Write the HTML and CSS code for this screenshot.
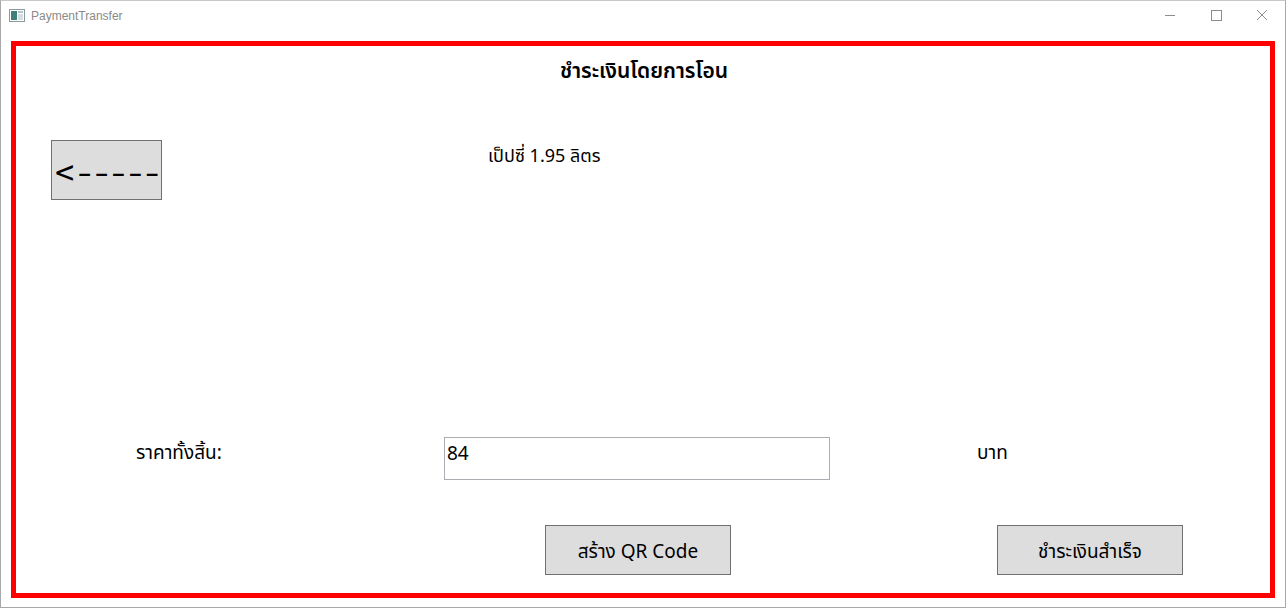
FILE: index.html
```html
<!DOCTYPE html>
<html lang="th">
<head>
<meta charset="utf-8">
<title>PaymentTransfer</title>
<link rel="stylesheet" href="styles.css">
</head>
<body>
<div class="window">
  <div class="titlebar">
    <div class="app">
      <svg class="app-icon" width="16" height="13" viewBox="0 0 16 13">
        <rect x="0.5" y="0.5" width="15" height="12" fill="#fff" stroke="#8a9aa0"/>
        <rect x="2" y="2" width="6" height="9" fill="#3f7f7a"/>
        <rect x="9" y="2" width="5" height="2" fill="#b9c4c8"/>
        <rect x="9" y="5" width="5" height="6" fill="#d6dde0"/>
      </svg>
      <span class="app-title">PaymentTransfer</span>
    </div>
    <div class="controls">
      <span class="ctl"><svg width="12" height="12" viewBox="0 0 12 12"><line x1="1" y1="6.5" x2="11" y2="6.5" stroke="#8c8c8c" stroke-width="1"/></svg></span>
      <span class="ctl"><svg width="12" height="12" viewBox="0 0 12 12"><rect x="1.5" y="1.5" width="10" height="10" fill="none" stroke="#8c8c8c" stroke-width="1"/></svg></span>
      <span class="ctl"><svg width="12" height="12" viewBox="0 0 12 12"><path d="M1 1 L11 11 M11 1 L1 11" stroke="#8c8c8c" stroke-width="1"/></svg></span>
    </div>
  </div>
  <div class="client">
    <div class="frame">
      <h1 class="heading">ชำระเงินโดยการโอน</h1>
      <div class="row-top">
        <button class="btn btn-back">&lt;<span class="dashes">-----</span></button>
        <div class="product">เป็ปซี่ 1.95 ลิตร</div>
      </div>
      <div class="row-price">
        <div class="label-total">ราคาทั้งสิ้น:</div>
        <div class="textbox">84</div>
        <div class="label-baht">บาท</div>
      </div>
      <div class="row-actions">
        <button class="btn btn-action btn-qr">สร้าง QR Code</button>
        <button class="btn btn-action btn-done">ชำระเงินสำเร็จ</button>
      </div>
    </div>
  </div>
</div>
</body>
</html>
```
FILE: styles.css
```css
* { box-sizing: border-box; }
html, body {
  margin: 0;
  padding: 0;
  background: #fff;
}
body {
  font-family: "Noto Sans", "Noto Sans Thai", "Leelawadee UI", "DejaVu Sans", sans-serif;
  color: #000;
  width: 1286px;
  height: 608px;
  overflow: hidden;
}
.window {
  width: 1286px;
  height: 608px;
  border: 1px solid #a8a8a8;
  border-top-color: #c8c8c8;
  display: flex;
  flex-direction: column;
}
.titlebar {
  height: 31px;
  display: flex;
  align-items: center;
  justify-content: space-between;
  flex: none;
}
.app {
  display: flex;
  align-items: center;
  padding-left: 8px;
  gap: 6px;
  margin-top: -2px;
}
.app-icon { display: block; }
.app-title {
  font-family: "Liberation Sans", "Noto Sans", sans-serif;
  font-size: 12px;
  color: #8a8a8a;
}
.controls {
  display: flex;
  margin-top: -3px;
}
.ctl {
  width: 46px;
  height: 28px;
  display: flex;
  align-items: center;
  justify-content: center;
}
.client {
  flex: 1;
  padding: 9px 10px 9px 10px;
  display: flex;
}
.frame {
  flex: 1;
  border: 5px solid #ff0000;
  display: flex;
  flex-direction: column;
}
.heading {
  margin: 10px 0 0 0;
  text-align: center;
  font-size: 21px;
  font-weight: 600;
  line-height: 28px;
  padding-left: 2px;
}
.row-top {
  display: flex;
  align-items: flex-start;
  padding-left: 35px;
  margin-top: 56px;
}
.btn {
  font-family: inherit;
  background: #dddddd;
  border: 1px solid #707070;
  color: #000;
  padding: 0;
  margin: 0;
}
.btn-back {
  width: 111px;
  height: 60px;
  font-family: "DejaVu Sans Mono", "Liberation Mono", monospace;
  font-size: 32px;
  line-height: 1;
  padding-top: 3px;
  padding-left: 3px;
  text-align: left;
  white-space: nowrap;
}
.dashes {
  display: inline-block;
  font-size: 28px;
  letter-spacing: -5.6px;
  margin-left: -2px;
  transform: scaleX(1.5);
  transform-origin: left center;
}
.product {
  margin-left: 326px;
  margin-top: 3px;
  font-size: 18px;
  line-height: 24px;
}
.row-price {
  display: flex;
  align-items: flex-start;
  margin-top: 237px;
}
.label-total {
  margin-left: 120px;
  margin-top: 2px;
  width: 308px;
  font-size: 19px;
  line-height: 26px;
}
.textbox {
  width: 386px;
  height: 43px;
  border: 1px solid #abadb3;
  font-size: 19px;
  line-height: 30px;
  padding-left: 2px;
}
.label-baht {
  margin-left: 147px;
  margin-top: 3px;
  font-size: 19px;
  line-height: 24px;
}
.row-actions {
  display: flex;
  margin-top: 45px;
  padding-left: 529px;
}
.btn-action {
  width: 186px;
  height: 50px;
}
.btn-qr {
  font-size: 19px;
  padding-top: 5px;
}
.btn-done {
  margin-left: 266px;
  font-size: 19px;
  padding-top: 5px;
}
```
